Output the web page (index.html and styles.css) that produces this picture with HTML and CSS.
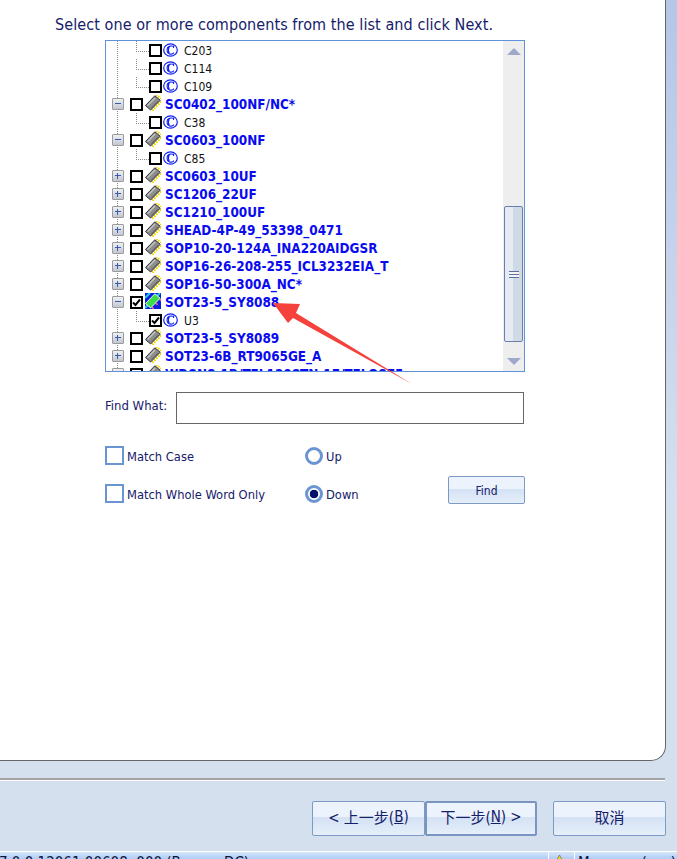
FILE: index.html
```html
<!DOCTYPE html>
<html lang="en">
<head>
<meta charset="utf-8">
<title>Select components</title>
<link rel="stylesheet" href="styles.css">
</head>
<body>
<svg class="defs" width="0" height="0" aria-hidden="true">
  <symbol id="chip" viewBox="0 0 16 16">
    <path d="M11 1 12.5 0M13 2.5 14.5 1M15 4 16 3" stroke="#f2d500" stroke-width="1.5" fill="none"/>
    <path d="M7 14 8.5 16M9 12 10.5 14M11 10 12.5 12M13 8 14.5 10M15 6 16 8" stroke="#f2d500" stroke-width="1.6" fill="none"/>
    <path d="M.5 10.5 9.8 .8 15.2 5.2 5.6 15Z" fill="#8d8d8d" stroke="#333" stroke-width="1"/>
    <path d="M2.6 10.6 10 3" stroke="#c8c8c8" stroke-width="1.3"/>
    <path d="M6.2 13 13 6" stroke="#666" stroke-width="1"/>
  </symbol>
  <symbol id="chip-sel" viewBox="0 0 16 16">
    <rect width="16" height="16" fill="#0a1fe0"/>
    <path d="M0 5 5 0M0 15 15 0" stroke="#27c8e8" stroke-width="2"/>
    <path d="M7 14 8.5 16M11 10 12.5 12M15 6 16 8" stroke="#ff5aa0" stroke-width="1.6"/>
    <path d="M.5 10.5 9.8 .8 15.2 5.2 5.6 15Z" fill="#3ddc4a" stroke="#e8f8e0" stroke-width="1"/>
  </symbol>
  <symbol id="comp" viewBox="0 0 15 14">
    <ellipse cx="7.5" cy="7" rx="6.8" ry="6.2" fill="#fff" stroke="#1020f0" stroke-width="1.2"/>
    <path d="M10.6 5V3.2H9.8C8 2.6 4 3 4 7S8 11.6 9.8 10.8L11 9.6M6.3 3.6C5.3 5.5 5.3 8.5 6.3 10.4" fill="none" stroke="#1020f0" stroke-width="1.1"/>
  </symbol>
  <symbol id="tick" viewBox="0 0 9 9">
    <path d="M1 4.5 3.5 7 8 1.5" fill="none" stroke="#000" stroke-width="2"/>
  </symbol>
</svg>

<div class="app">
  <main class="panel">
    <p class="prompt">Select one or more components from the list and click Next.</p>

    <div class="tree">
      <div class="tree-rows">
        <div class="row leaf"><span class="check"></span><svg class="comp"><use href="#comp"/></svg><span class="refdes">C203</span></div>
        <div class="row leaf"><span class="check"></span><svg class="comp"><use href="#comp"/></svg><span class="refdes">C114</span></div>
        <div class="row leaf"><span class="check"></span><svg class="comp"><use href="#comp"/></svg><span class="refdes">C109</span></div>
        <div class="row group"><span class="exp minus"></span><span class="check"></span><svg class="chip"><use href="#chip"/></svg><span class="part">SC0402_100NF/NC*</span></div>
        <div class="row leaf"><span class="check"></span><svg class="comp"><use href="#comp"/></svg><span class="refdes">C38</span></div>
        <div class="row group"><span class="exp minus"></span><span class="check"></span><svg class="chip"><use href="#chip"/></svg><span class="part">SC0603_100NF</span></div>
        <div class="row leaf"><span class="check"></span><svg class="comp"><use href="#comp"/></svg><span class="refdes">C85</span></div>
        <div class="row group"><span class="exp plus"></span><span class="check"></span><svg class="chip"><use href="#chip"/></svg><span class="part">SC0603_10UF</span></div>
        <div class="row group"><span class="exp plus"></span><span class="check"></span><svg class="chip"><use href="#chip"/></svg><span class="part">SC1206_22UF</span></div>
        <div class="row group"><span class="exp plus"></span><span class="check"></span><svg class="chip"><use href="#chip"/></svg><span class="part">SC1210_100UF</span></div>
        <div class="row group"><span class="exp plus"></span><span class="check"></span><svg class="chip"><use href="#chip"/></svg><span class="part">SHEAD-4P-49_53398_0471</span></div>
        <div class="row group"><span class="exp plus"></span><span class="check"></span><svg class="chip"><use href="#chip"/></svg><span class="part">SOP10-20-124A_INA220AIDGSR</span></div>
        <div class="row group"><span class="exp plus"></span><span class="check"></span><svg class="chip"><use href="#chip"/></svg><span class="part">SOP16-26-208-255_ICL3232EIA_T</span></div>
        <div class="row group"><span class="exp plus"></span><span class="check"></span><svg class="chip"><use href="#chip"/></svg><span class="part">SOP16-50-300A_NC*</span></div>
        <div class="row group"><span class="exp minus"></span><span class="check"><svg class="tick"><use href="#tick"/></svg></span><svg class="chip"><use href="#chip-sel"/></svg><span class="part">SOT23-5_SY8088</span></div>
        <div class="row leaf"><span class="check"><svg class="tick"><use href="#tick"/></svg></span><svg class="comp"><use href="#comp"/></svg><span class="refdes">U3</span></div>
        <div class="row group"><span class="exp plus"></span><span class="check"></span><svg class="chip"><use href="#chip"/></svg><span class="part">SOT23-5_SY8089</span></div>
        <div class="row group"><span class="exp plus"></span><span class="check"></span><svg class="chip"><use href="#chip"/></svg><span class="part">SOT23-6B_RT9065GE_A</span></div>
        <div class="row group"><span class="exp plus"></span><span class="check"></span><svg class="chip"><use href="#chip"/></svg><span class="part">WDSN8-1B/TFL1208TN-1F/TFLO875</span></div>
      </div>
      <div class="scrollbar">
        <span class="arrow-up"></span>
        <div class="thumb"><span class="grip"></span></div>
        <span class="arrow-down"></span>
      </div>
    </div>

    <div class="find-row">
      <span class="label">Find What:</span>
      <span class="find-input"></span>
    </div>

    <div class="option-row first">
      <span class="option"><span class="box"></span><span class="opt-text">Match Case</span></span>
      <span class="option radio-col"><span class="radio"></span><span class="opt-text">Up</span></span>
    </div>
    <div class="option-row">
      <span class="option"><span class="box"></span><span class="opt-text">Match Whole Word Only</span></span>
      <span class="option radio-col"><span class="radio on"></span><span class="opt-text">Down</span></span>
      <button class="btn find-btn" type="button">Find</button>
    </div>

    <svg class="annotation" width="677" height="400" viewBox="0 0 677 400" aria-hidden="true">
      <polygon points="273,303 300,304 296,313 412,384 293,318 288,323" fill="#f5423c"/>
    </svg>
  </main>

  <div class="divider"></div>

  <div class="actions">
    <button class="btn wizard" type="button">&lt; 上一步(<u>B</u>)</button>
    <button class="btn wizard primary" type="button">下一步(<u>N</u>) &gt;</button>
    <button class="btn wizard cancel" type="button">取消</button>
  </div>

  <footer class="status">
    <span class="status-text">7.0.0.12061.00608 &nbsp;000 (Bypass DC)</span>
    <span class="status-warn">
      <svg width="13" height="12" viewBox="0 0 13 12"><path d="M6.5 0 13 12H0Z" fill="#f4d90a" stroke="#555" stroke-width=".6"/></svg>
    </span>
    <span class="status-msg">Message (xxx)</span>
  </footer>
</div>
</body>
</html>
```
FILE: styles.css
```css
* { box-sizing: border-box; }
html, body { margin: 0; padding: 0; }
body {
  width: 677px;
  height: 859px;
  overflow: hidden;
  font-family: "DejaVu Sans", sans-serif;
  font-stretch: condensed;
  color: #15206b;
}
.defs { position: absolute; }
.app {
  height: 859px;
  display: flex;
  flex-direction: column;
  background: linear-gradient(#b4c7e7, #d5e0ef 60%);
}
.panel {
  position: relative;
  flex: none;
  width: 666px;
  height: 761px;
  padding-top: 16px;
  background: #fff;
  border-right: 1px solid #666;
  border-bottom: 1px solid #666;
  border-bottom-right-radius: 15px;
}
.prompt {
  margin: 0 0 0 55px;
  height: 24px;
  line-height: 18px;
  font-size: 16px;
  letter-spacing: .08px;
  white-space: nowrap;
}
.tree {
  display: flex;
  width: 420px;
  height: 332px;
  margin-left: 105px;
  border: 1px solid #5f92d8;
  overflow: hidden;
}
.tree-rows { flex: 1; overflow: hidden; color: #000; }
.row {
  display: flex;
  align-items: center;
  height: 18px;
  white-space: nowrap;
  background:
    repeating-linear-gradient(#888 0 1px, transparent 1px 2px) 11px 0 / 1px 100% no-repeat;
}
.group { padding-left: 6px; }
.leaf {
  padding-left: 43px;
  background:
    repeating-linear-gradient(#888 0 1px, transparent 1px 2px) 11px 0 / 1px 100% no-repeat,
    repeating-linear-gradient(#888 0 1px, transparent 1px 2px) 30px 0 / 1px 10px no-repeat,
    repeating-linear-gradient(90deg, #888 0 1px, transparent 1px 2px) 30px 10px / 13px 1px no-repeat;
}
.exp {
  position: relative;
  flex: none;
  width: 12px;
  height: 12px;
  margin-right: 6px;
  border: 1px solid #9b9b9b;
  border-radius: 1px;
  background: linear-gradient(#eef0f4, #c3c7d2);
}
.exp::before {
  content: "";
  position: absolute;
  left: 2px;
  top: 4px;
  width: 6px;
  height: 1px;
  background: #3a5ba8;
}
.plus::after {
  content: "";
  position: absolute;
  left: 4px;
  top: 2px;
  width: 1px;
  height: 6px;
  background: #3a5ba8;
}
.check {
  display: flex;
  align-items: center;
  justify-content: center;
  flex: none;
  width: 13px;
  height: 13px;
  border: 2px solid #000;
  background: #fff;
}
.tick { width: 9px; height: 9px; }
.chip { flex: none; width: 16px; height: 16px; margin: -2px 4px 0 2px; }
.comp { flex: none; width: 15px; height: 14px; margin: 0 6px 0 1px; }
.part { font-weight: 700; font-size: 13.4px; color: #0b0bf0; }
.refdes { font-size: 12px; color: #111; margin-top: 2px; }

.scrollbar {
  flex: none;
  width: 21px;
  display: flex;
  flex-direction: column;
  align-items: center;
  padding-top: 7px;
  background: #eee;
}
.arrow-up, .arrow-down {
  flex: none;
  width: 0;
  height: 0;
  border-left: 7px solid transparent;
  border-right: 7px solid transparent;
}
.arrow-up { border-bottom: 7px solid #9da8cb; }
.arrow-down { border-top: 7px solid #9da8cb; margin-top: 16px; }
.thumb {
  flex: none;
  display: flex;
  align-items: center;
  justify-content: center;
  width: 19px;
  height: 136px;
  margin-top: 151px;
  border: 1px solid #6a7fae;
  border-radius: 2px;
  background: linear-gradient(90deg, #e6eaf2 0 45%, #d0d9e6 45%);
}
.grip {
  width: 10px;
  height: 7px;
  background: repeating-linear-gradient(#5c6f9e 0 1px, #f2f4f8 1px 3px);
}

.find-row {
  display: flex;
  align-items: center;
  height: 32px;
  margin: 20px 0 0 105px;
}
.label { width: 71px; font-size: 13px; position: relative; top: -3px; white-space: nowrap; }
.find-input { width: 348px; height: 32px; border: 1px solid #666; background: #fff; }
.option-row {
  display: flex;
  align-items: flex-end;
  height: 28px;
  margin: 11px 0 0 105px;
  padding-bottom: 1px;
}
.option-row.first { height: 19px; margin-top: 22px; padding-bottom: 0; }
.option {
  display: flex;
  align-items: center;
  gap: 3px;
  width: 200px;
  height: 19px;
  font-size: 12.8px;
  white-space: nowrap;
}
.opt-text { margin-top: 2px; }
.radio-col { width: 143px; gap: 3px; }
.box { flex: none; width: 19px; height: 19px; border: 2px solid #6b95d2; background: #fff; }
.radio {
  flex: none;
  width: 18px;
  height: 18px;
  border: 3px solid #6b95d2;
  border-radius: 50%;
  background: #fff;
}
.radio.on { background: radial-gradient(circle, #06106b 0 4px, #fff 4.6px); }

.btn {
  display: inline-flex;
  align-items: center;
  justify-content: center;
  padding: 0;
  font-family: "DejaVu Sans", "Noto Sans CJK SC", sans-serif;
  font-stretch: condensed;
  font-size: 12px;
  color: #15206b;
  border: 1px solid #7b9bc6;
  border-radius: 2px;
  background: linear-gradient(#ecf3fc 0 45%, #d3e1f4 45%, #e6effa);
}
.find-btn { width: 77px; height: 28px; margin-bottom: -1px; padding-top: 2px; }

.annotation { position: absolute; left: 0; top: 0; pointer-events: none; }

.divider {
  flex: none;
  width: 665px;
  height: 3px;
  margin-top: 17px;
  border-top: 2px solid #a3a3a3;
  border-bottom: 1px solid #fff;
}
.actions {
  flex: none;
  display: flex;
  width: 666px;
  margin-top: 20px;
  height: 35px;
}
.wizard { flex: none; width: 113px; height: 35px; font-size: 15px; padding-bottom: 4px; }
.wizard:first-child { margin-left: 312px; }
.primary { width: 112px; border-width: 2px; border-color: #7a96c0; }
.cancel { margin-left: 16px; }

.status {
  flex: none;
  display: flex;
  height: 9px;
  margin-top: 15px;
  border-top: 1px solid #fff;
  background: linear-gradient(#d5e6fb, #a9c9f3);
  overflow: hidden;
  font-size: 15px;
  line-height: 16px;
  color: #0d1440;
  white-space: nowrap;
}
.status-text { flex: none; width: 549px; padding-top: 3px; margin-left: -1px; }
.status-warn { flex: none; width: 27px; padding: 2px 0 0 4px; border-left: 1px solid #fff; border-right: 1px solid #fff; }
.status-msg { flex: none; padding: 3px 0 0 3px; }
```
